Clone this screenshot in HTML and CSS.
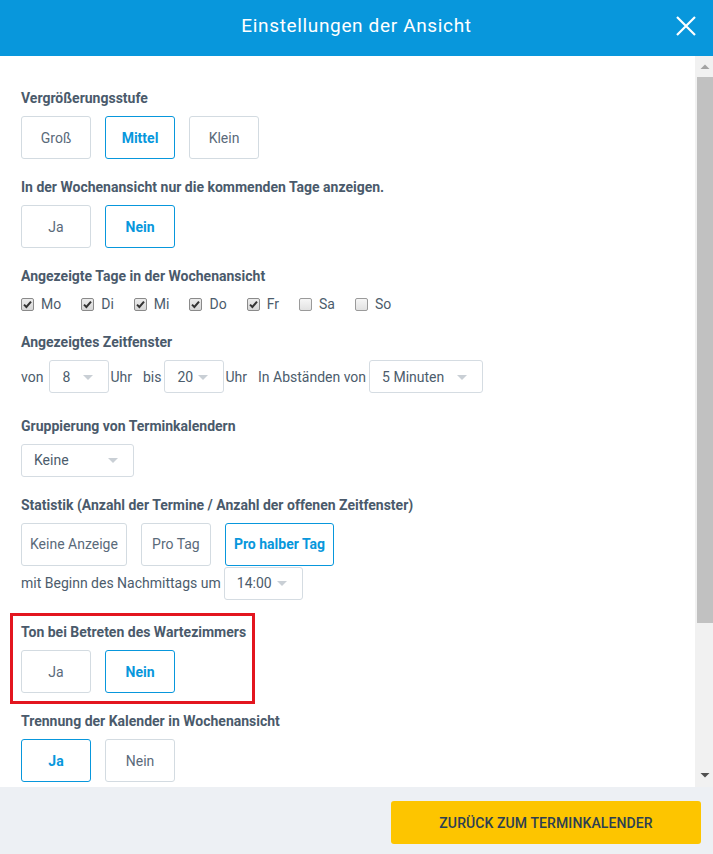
FILE: index.html
```html
<!DOCTYPE html>
<html lang="de">
<head>
<meta charset="utf-8">
<title>Einstellungen der Ansicht</title>
<link rel="stylesheet" href="styles.css">
</head>
<body>
<div class="modal">
  <header class="header">
    <span></span>
    <h1 class="title">Einstellungen der Ansicht</h1>
    <button class="close" aria-label="Schließen">
      <svg width="22" height="22" viewBox="0 0 22 22"><path d="M2 2 L20 20 M20 2 L2 20" stroke="#fff" stroke-width="2.2" fill="none"/></svg>
    </button>
  </header>

  <div class="body-area">
    <main class="content">
      <section class="group">
        <div class="label">Vergrößerungsstufe</div>
        <div class="btns">
          <button class="opt">Groß</button>
          <button class="opt active">Mittel</button>
          <button class="opt">Klein</button>
        </div>
      </section>

      <section class="group">
        <div class="label">In der Wochenansicht nur die kommenden Tage anzeigen.</div>
        <div class="btns">
          <button class="opt">Ja</button>
          <button class="opt active">Nein</button>
        </div>
      </section>

      <section class="group">
        <div class="label">Angezeigte Tage in der Wochenansicht</div>
        <div class="days">
          <label class="day"><span class="cb checked"><svg width="11" height="11" viewBox="0 0 11 11"><path d="M2 5.6 L4.4 8 L9 2.6" stroke="#333" stroke-width="2" fill="none"/></svg></span>Mo</label>
          <label class="day"><span class="cb checked"><svg width="11" height="11" viewBox="0 0 11 11"><path d="M2 5.6 L4.4 8 L9 2.6" stroke="#333" stroke-width="2" fill="none"/></svg></span>Di</label>
          <label class="day"><span class="cb checked"><svg width="11" height="11" viewBox="0 0 11 11"><path d="M2 5.6 L4.4 8 L9 2.6" stroke="#333" stroke-width="2" fill="none"/></svg></span>Mi</label>
          <label class="day"><span class="cb checked"><svg width="11" height="11" viewBox="0 0 11 11"><path d="M2 5.6 L4.4 8 L9 2.6" stroke="#333" stroke-width="2" fill="none"/></svg></span>Do</label>
          <label class="day"><span class="cb checked"><svg width="11" height="11" viewBox="0 0 11 11"><path d="M2 5.6 L4.4 8 L9 2.6" stroke="#333" stroke-width="2" fill="none"/></svg></span>Fr</label>
          <label class="day"><span class="cb"></span>Sa</label>
          <label class="day"><span class="cb"></span>So</label>
        </div>
      </section>

      <section class="group group-select">
        <div class="label">Angezeigtes Zeitfenster</div>
        <div class="row">
          <span class="txt t-von">von</span>
          <div class="select w-hour"><span>8</span><span class="caret"></span></div>
          <span class="txt t-uhr">Uhr</span>
          <span class="txt">bis</span>
          <div class="select w-hour"><span>20</span><span class="caret"></span></div>
          <span class="txt t-uhr">Uhr</span>
          <span class="txt">In Abständen von</span>
          <div class="select w-int"><span>5 Minuten</span><span class="caret"></span></div>
        </div>
      </section>

      <section class="group">
        <div class="label">Gruppierung von Terminkalendern</div>
        <div class="row">
          <div class="select w-group"><span>Keine</span><span class="caret"></span></div>
        </div>
      </section>

      <section class="group group-select">
        <div class="label">Statistik (Anzahl der Termine / Anzahl der offenen Zeitfenster)</div>
        <div class="btns">
          <button class="opt">Keine Anzeige</button>
          <button class="opt">Pro Tag</button>
          <button class="opt active">Pro halber Tag</button>
        </div>
        <div class="row row-after">
          <span class="txt">mit Beginn des Nachmittags um</span>
          <div class="select w-time"><span>14:00</span><span class="caret"></span></div>
        </div>
      </section>

      <section class="group highlighted">
        <div class="label">Ton bei Betreten des Wartezimmers</div>
        <div class="btns">
          <button class="opt">Ja</button>
          <button class="opt active">Nein</button>
        </div>
      </section>

      <section class="group">
        <div class="label">Trennung der Kalender in Wochenansicht</div>
        <div class="btns">
          <button class="opt active">Ja</button>
          <button class="opt">Nein</button>
        </div>
      </section>
    </main>

    <div class="scrollbar" aria-hidden="true">
      <div class="sb-btn sb-up"><svg width="18" height="17" viewBox="0 0 18 17"><polygon points="5.5,13 14.5,13 10,8.5" fill="#a3a3a3"/></svg></div>
      <div class="sb-track"><div class="sb-thumb"></div></div>
      <div class="sb-btn sb-down"><svg width="18" height="17" viewBox="0 0 18 17"><polygon points="5.5,3 14.5,3 10,7.5" fill="#505050"/></svg></div>
    </div>
  </div>

  <footer class="footer">
    <button class="back">Zurück zum Terminkalender</button>
  </footer>
</div>
</body>
</html>
```

FILE: styles.css
```css
*, *::before, *::after { box-sizing: border-box; }

html, body {
  margin: 0;
  padding: 0;
  height: 100%;
}

body {
  font-family: Roboto, "Liberation Sans", Arial, sans-serif;
  font-size: 14px;
  color: #4c5c6c;
  background: #fff;
}

.modal {
  height: 100vh;
  display: flex;
  flex-direction: column;
}

/* Header */
.header {
  flex: 0 0 56px;
  background: #0897dc;
  display: grid;
  grid-template-columns: 1fr auto 1fr;
  align-items: center;
  padding-bottom: 5px;
}

.title {
  margin: 0;
  font-size: 19px;
  font-weight: 400;
  color: #fff;
  letter-spacing: 0.65px;
}

.close {
  justify-self: end;
  margin-right: 16px;
  padding: 0;
  border: 0;
  background: none;
  width: 22px;
  height: 22px;
  display: flex;
}

/* Body area: scroll content + scrollbar */
.body-area {
  flex: 1 1 auto;
  min-height: 0;
  display: flex;
}

.content {
  flex: 1 1 auto;
  overflow-y: auto;
  scrollbar-width: none;
  padding: 32px 0 207px 21px;
}
.content::-webkit-scrollbar { display: none; }

.scrollbar {
  flex: 0 0 18px;
  display: flex;
  flex-direction: column;
  background: #f1f1f1;
}
.sb-btn {
  flex: 0 0 17px;
  display: flex;
}
.sb-track {
  flex: 1 1 auto;
  padding-top: 4px;
}
.sb-thumb {
  margin-left: 2px;
  height: 546px;
  background: #c1c1c1;
}

/* Groups */
.group {
  margin-bottom: 18px;
}
.group-select {
  margin-bottom: 22.5px;
}

.label {
  font-weight: 700;
  font-size: 14px;
  line-height: 20px;
  color: #4a5a6b;
  margin-bottom: 8px;
}

.btns {
  display: flex;
  gap: 14px;
}

.opt {
  min-width: 70px;
  height: 43px;
  padding: 0 8px;
  border: 1px solid #d3dbe1;
  border-radius: 3px;
  background: #fff;
  font-family: inherit;
  font-size: 14px;
  color: #5a6a7a;
}
.opt.active {
  border-color: #0897dc;
  color: #0897dc;
  font-weight: 700;
}

/* Checkbox row */
.days {
  display: flex;
  gap: 20px;
  line-height: 20px;
  height: 20px;
  align-items: center;
}
.day {
  display: flex;
  align-items: center;
  color: #4c5c6c;
}
.cb {
  width: 13px;
  height: 13px;
  border: 1px solid #9a9a9a;
  border-radius: 2px;
  background: linear-gradient(#f6f6f6, #e2e2e2);
  margin-right: 7px;
  display: flex;
  align-items: center;
  justify-content: center;
}
.cb.checked {
  border-color: #8a8a8a;
  background: linear-gradient(#ececec, #d6d6d6);
}

/* Inline rows with selects */
.row {
  display: flex;
  align-items: center;
  gap: 3px;
}
.row-after {
  margin-top: 1px;
}
.txt {
  color: #4c5c6c;
  line-height: 20px;
}
.t-von { margin-right: 3px; }
.t-uhr { margin-left: -2px; margin-right: 8px; }

.select {
  height: 33px;
  display: flex;
  align-items: center;
  justify-content: space-between;
  padding: 0 15px 0 12px;
  border: 1px solid #d5dce2;
  border-radius: 3px;
  background: #fff;
  color: #4c5c6c;
}
.caret {
  width: 0;
  height: 0;
  border-left: 5px solid transparent;
  border-right: 5px solid transparent;
  border-top: 5px solid #c9cfd5;
  margin-top: 1px;
}
.w-hour { width: 60px; }
.w-int { width: 114px; }
.w-group { width: 113px; }
.w-time { width: 79px; }

/* Highlighted section (annotation frame) */
.highlighted {
  position: relative;
}
.highlighted::after {
  content: "";
  position: absolute;
  top: -9px;
  left: -11px;
  width: 245px;
  height: 91px;
  border: 3px solid #e3161f;
  pointer-events: none;
}

/* Footer */
.footer {
  flex: 0 0 67px;
  background: #edf0f4;
  display: flex;
  justify-content: flex-end;
  align-items: flex-start;
  padding: 14px 12px 0 0;
}
.back {
  width: 310px;
  height: 43px;
  border: 0;
  border-radius: 3px;
  background: #fdc500;
  color: #2d3f52;
  font-family: inherit;
  font-size: 14px;
  font-weight: 500;
  text-transform: uppercase;
  letter-spacing: 0.1px;
}
```
